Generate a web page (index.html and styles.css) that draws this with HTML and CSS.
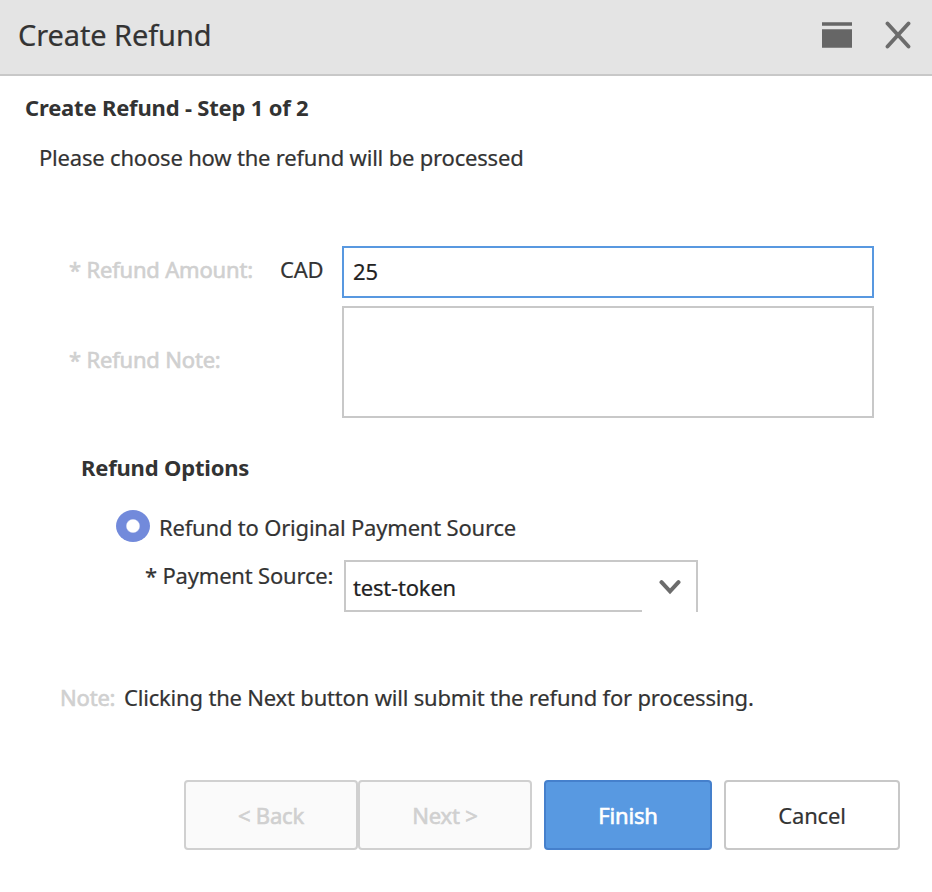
FILE: index.html
```html
<!DOCTYPE html>
<html lang="en">
<head>
<meta charset="utf-8">
<title>Create Refund</title>
<link rel="stylesheet" href="styles.css">
</head>
<body>
<div class="dialog">
  <header class="titlebar">
    <h1 class="title">Create Refund</h1>
    <svg class="icon-window" width="30" height="27" viewBox="0 0 30 27" aria-hidden="true"><path fill="#666" d="M0 0.3h30v3.4H0zM0 7.3h30v18.4H0z"/></svg>
    <svg class="icon-close" width="26" height="28" viewBox="0 0 26 28" aria-hidden="true"><path d="M2.500 2.500 23.500 25.500M23.500 2.500 2.500 25.500" stroke="#6c6c6c" stroke-width="3.800" stroke-linecap="round" fill="none"/></svg>
  </header>
  <main class="content">
    <h2 class="step">Create Refund - Step 1 of 2</h2>
    <p class="intro">Please choose how the refund will be processed</p>
    <div class="row amount-row">
      <label class="label disabled" for="amount">* Refund Amount:</label>
      <span class="currency">CAD</span>
      <input class="field amount" id="amount" type="text" value="25">
    </div>
    <div class="row note-row">
      <label class="label disabled" for="note">* Refund Note:</label>
      <textarea class="field note" id="note"></textarea>
    </div>
    <h3 class="options">Refund Options</h3>
    <div class="row radio-row">
      <span class="radio"></span>
      <span class="radio-label">Refund to Original Payment Source</span>
    </div>
    <div class="row source-row">
      <span class="source-label">* Payment Source:</span>
      <div class="select">
        <span class="select-value">test-token</span>
        <span class="select-arrow"><svg width="22" height="16" viewBox="0 0 22 16" aria-hidden="true"><path d="M2.500 3.200 11 12.400 19.500 3.200" stroke="#6c6c6c" stroke-width="4" stroke-linecap="round" fill="none"/></svg></span>
      </div>
    </div>
    <p class="notice"><span class="notice-label disabled">Note:</span>Clicking the Next button will submit the refund for processing.</p>
  </main>
  <footer class="buttons">
    <button class="btn back" disabled>&lt; Back</button>
    <button class="btn next" disabled>Next &gt;</button>
    <button class="btn finish">Finish</button>
    <button class="btn cancel">Cancel</button>
  </footer>
</div>
</body>
</html>
```
FILE: styles.css
```css
* { box-sizing: border-box; }
body {
  margin: 0;
  background: #fff;
  color: #333;
  font: 22px/30px "Noto Sans", "Open Sans", sans-serif;
  letter-spacing: -0.19px;
  -webkit-text-stroke: 0.2px;
}
h1, h2, h3, p { margin: 0; }
h2, h3 { -webkit-text-stroke: 0; }
.dialog { width: 932px; height: 892px; overflow: hidden; white-space: nowrap; }
.titlebar {
  display: flex;
  height: 76px;
  padding-left: 18px;
  background: #e4e4e4;
  border-bottom: 2px solid #c8c8c8;
}
.title { flex: 1; padding-top: 15px; font-size: 29px; line-height: 40px; font-weight: 400; letter-spacing: -0.1px; }
.icon-window { margin: 22px 33px 0 0; }
.icon-close { margin: 21px 21px 0 0; }
.row { display: flex; align-items: flex-start; }
.step { padding: 16px 0 0 25px; font-size: 22px; line-height: 30px; }
.intro { padding: 20px 0 0 39px; }
.disabled { color: #d0d0d0; -webkit-text-stroke: 0.6px #d0d0d0; }
.label { flex: none; width: 280px; padding-left: 69px; }
.amount-row { margin-top: 74px; }
.amount-row .label, .currency { padding-top: 8px; }
.currency { width: 62px; }
.field {
  display: block;
  width: 532px;
  margin: 0;
  border: 2px solid #c8c8c8;
  border-radius: 0;
  outline: none;
  background: #fff;
  color: #222;
  font: inherit;
  letter-spacing: inherit;
  resize: none;
}
.amount { height: 52px; padding: 0 9px 2px; border-color: #5898e0; }
.note-row { margin-top: 8px; }
.note-row .label { width: 342px; padding-top: 38px; }
.note { height: 112px; }
.options { padding: 34px 0 0 81px; font-size: 22px; line-height: 30px; }
.radio-row { margin-top: 28px; padding-left: 116px; gap: 9px; }
.radio { width: 34px; height: 32px; border-radius: 50%; background: radial-gradient(circle, #fff 0 6px, #728adb 7.3px); }
.radio-label { padding-top: 2px; }
.source-row { margin-top: 18px; padding-left: 145px; }
.source-label { width: 199px; }
.select {
  display: flex;
  width: 354px;
  height: 52px;
  border: 2px solid #c8c8c8;
  border-bottom: 0;
}
.select-value { width: 296px; padding: 10px 0 0 7px; border-bottom: 2px solid #c8c8c8; color: #222; }
.select-arrow { padding: 17px 0 0 17px; line-height: 0; }
.notice { padding: 70px 0 0 60px; }
.notice-label { display: inline-block; width: 64px; }
.buttons { display: flex; margin-top: 68px; padding-left: 184px; }
.btn {
  height: 70px;
  padding: 0;
  border: 2px solid #c8c8c8;
  border-radius: 4px;
  background: #fff;
  color: #333;
  font: inherit;
  letter-spacing: inherit;
}
.back { width: 174px; }
.next { width: 174px; }
.back, .next { background: #fafafa; border-color: #d0d0d0; color: #d0d0d0; -webkit-text-stroke: 0.6px #d0d0d0; }
.finish { width: 168px; margin-left: 12px; background: #5899e1; border-color: #4580cc; color: #fff; -webkit-text-stroke: 0.6px #fff; }
.cancel { width: 176px; margin-left: 12px; }
```
